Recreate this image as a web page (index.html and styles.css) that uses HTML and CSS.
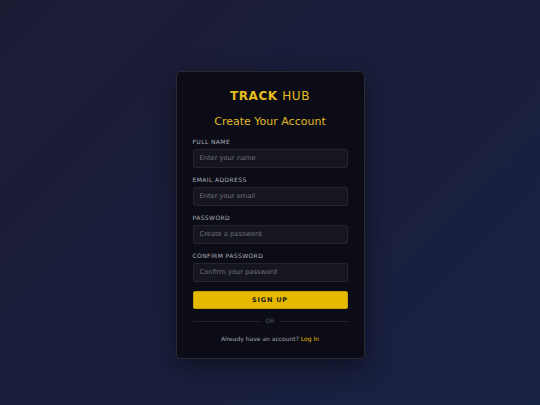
FILE: index.html
```html
<!DOCTYPE html>
<html lang="en">
<head>
<meta charset="utf-8">
<title>Track Hub - Sign Up</title>
<link rel="stylesheet" href="styles.css">
</head>
<body>
<main class="card">
  <h1 class="brand"><span class="brand-bold">TRACK</span> HUB</h1>
  <h2 class="subtitle">Create Your Account</h2>
  <form class="form">
    <div class="field">
      <label class="label" for="name">FULL NAME</label>
      <input class="input" id="name" type="text" placeholder="Enter your name">
    </div>
    <div class="field">
      <label class="label" for="email">EMAIL ADDRESS</label>
      <input class="input" id="email" type="email" placeholder="Enter your email">
    </div>
    <div class="field">
      <label class="label" for="pw">PASSWORD</label>
      <input class="input" id="pw" type="password" placeholder="Create a password">
    </div>
    <div class="field">
      <label class="label" for="pw2">CONFIRM PASSWORD</label>
      <input class="input" id="pw2" type="password" placeholder="Confirm your password">
    </div>
    <button class="btn" type="button">SIGN UP</button>
  </form>
  <div class="divider"><span class="line"></span><span class="or">OR</span><span class="line"></span></div>
  <p class="footer">Already have an account? <a class="link" href="#">Log In</a></p>
</main>
</body>
</html>
```
FILE: styles.css
```css
* { box-sizing: border-box; }
html, body { margin: 0; padding: 0; }
body {
  min-height: 100vh;
  background: linear-gradient(135deg, #1c1c35 0%, #1a1f3d 60%, #182243 100%);
  font-family: "DejaVu Sans", Verdana, sans-serif;
  display: flex;
  justify-content: center;
  align-items: flex-start;
  padding-top: 71px;
}
.card {
  width: 189px;
  background: #0b0c16;
  border: 1px solid #2a2a33;
  border-radius: 5px;
  box-shadow: 0 8px 24px rgba(0, 0, 0, 0.45);
  padding: 17px 16px 15px;
  display: flex;
  flex-direction: column;
}
.brand {
  margin: 0;
  text-align: center;
  font-size: 12px;
  line-height: 14px;
  font-weight: normal;
  letter-spacing: 0.6px;
  color: #e6bd1c;
}
.brand-bold { font-weight: bold; }
.subtitle {
  margin: 12px 0 0;
  text-align: center;
  font-size: 11px;
  line-height: 14px;
  font-weight: normal;
  color: #e0b828;
}
.form {
  margin-top: 9px;
  display: flex;
  flex-direction: column;
  gap: 8.5px;
}
.field { display: flex; flex-direction: column; gap: 3px; }
.label {
  font-size: 6px;
  line-height: 8px;
  letter-spacing: 0.4px;
  color: #b0b0ba;
}
.input {
  height: 18.5px;
  width: 100%;
  background: #15161f;
  border: 1px solid #24252e;
  border-radius: 2px;
  padding: 0 6px;
  font-family: "DejaVu Sans", Verdana, sans-serif;
  font-size: 6.7px;
  color: #d0d0d8;
  outline: none;
}
.input::placeholder { color: #70717b; }
.btn {
  margin-top: 0.5px;
  height: 18px;
  width: 100%;
  background: #e6b800;
  border: 1px solid #c9a200;
  border-radius: 2px;
  font-family: "DejaVu Sans", Verdana, sans-serif;
  font-size: 6.5px;
  font-weight: bold;
  letter-spacing: 0.8px;
  color: #1b1a12;
  padding: 0;
}
.divider {
  margin-top: 8.5px;
  display: flex;
  align-items: center;
  gap: 6px;
  height: 8px;
}
.line { flex: 1; height: 1px; background: #22232c; }
.or { font-size: 6px; line-height: 8px; color: #5a5b64; }
.footer {
  margin: 9.5px 0 0;
  text-align: center;
  font-size: 6px;
  line-height: 8px;
  color: #a2a3ad;
}
.link { color: #e6b800; text-decoration: none; }
```
